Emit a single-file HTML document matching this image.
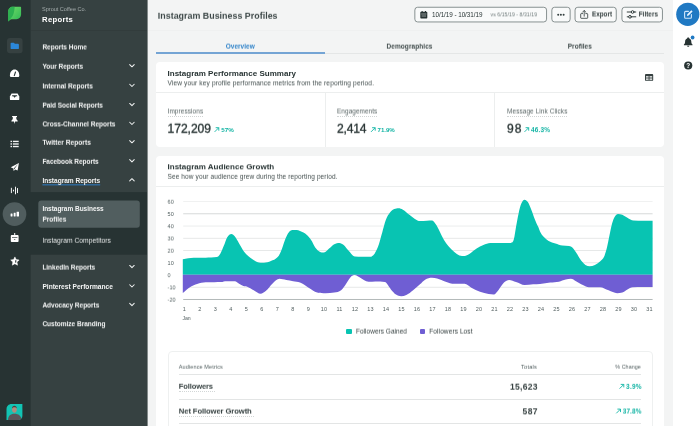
<!DOCTYPE html>
<html lang="en"><head><meta charset="utf-8"><title>Instagram Business Profiles</title>
<style>
html,body{margin:0;padding:0}
body{width:700px;height:426px;overflow:hidden;position:relative;background:#f3f4f4;font-family:"Liberation Sans", sans-serif;}
#app{position:absolute;left:0;top:0;width:700px;height:426px;overflow:hidden;will-change:transform}
.t{position:absolute;white-space:nowrap;margin:0;padding:0}
.b{position:absolute}
.g{display:contents}
svg{position:absolute;left:0;top:0;overflow:visible}

</style></head><body><div id="app">
<div class="b" style="left:30.00px;top:0.00px;width:117.00px;height:426.00px;background:#364141;"></div>
<div class="b" style="left:30.50px;top:30.00px;width:116.50px;height:0.80px;background:rgba(0,0,0,.07);"></div>
<div class="b" style="left:147.00px;top:0.00px;width:0.80px;height:426.00px;background:rgba(39,51,51,.55);"></div>
<div class="b" style="left:147.80px;top:30.00px;width:525.00px;height:0.80px;background:#eff0f0;"></div>
<div class="b" style="left:673.00px;top:0.00px;width:27.00px;height:426.00px;background:#ffffff;"></div>
<svg width="700" height="426" viewBox="0 0 700 426"><rect x="0" y="0" width="30.6" height="426" fill="#273333"/><rect x="30" y="192.1" width="117" height="62.6" fill="#273333"/><rect x="38.3" y="200.6" width="101.5" height="27.2" rx="3" fill="#515e5f"/><circle cx="14.5" cy="214.1" r="11.85" fill="#505d5e"/><rect x="7" y="38.1" width="15.6" height="15.2" rx="3" fill="#364141"/><rect x="42.4" y="184.25" width="57.8" height="1.15" fill="#2e74b4"/><rect x="414.85" y="7.25" width="131.70" height="14.7" rx="2.8" fill="#f9fafa" stroke="#7c8686" stroke-width="0.9"/><rect x="551.85" y="7.25" width="18.30" height="14.7" rx="2.8" fill="#f9fafa" stroke="#7c8686" stroke-width="0.9"/><rect x="575.05" y="7.25" width="41.20" height="14.7" rx="2.8" fill="#f9fafa" stroke="#7c8686" stroke-width="0.9"/><rect x="621.95" y="7.25" width="40.50" height="14.7" rx="2.8" fill="#f9fafa" stroke="#7c8686" stroke-width="0.9"/></svg>
<nav class="g" aria-label="Reports">
<div class="t" id="t1" style="left:42px;top:6px;font-size:5.55px;line-height:7px;color:#a3abab;padding-left:0.1px;letter-spacing:-0.020px;">Sprout Coffee Co.</div>
<div class="t" id="t2" style="left:42px;top:15px;font-size:7.70px;line-height:10px;color:#fff;padding-left:0.1px;font-weight:700;letter-spacing:0.292px;">Reports</div>
<div class="t" id="t3" style="left:42px;top:43px;font-size:6.55px;line-height:8px;color:#f3f4f4;padding-left:0.4px;font-weight:700;letter-spacing:-0.023px;will-change:transform;transform:translateY(0.43px) rotate(0.02deg);transform-origin:0 50%;">Reports Home</div>
<div class="t" id="t4" style="left:42px;top:62px;font-size:6.54px;line-height:8px;color:#f3f4f4;padding-left:0.4px;font-weight:700;letter-spacing:-0.017px;will-change:transform;transform:translateY(0.73px) rotate(0.02deg);transform-origin:0 50%;">Your Reports</div>
<div class="t" id="t5" style="left:42px;top:82px;font-size:6.59px;line-height:8px;color:#f3f4f4;padding-left:0.4px;font-weight:700;will-change:transform;transform:translateY(0.44px) rotate(0.02deg);transform-origin:0 50%;">Internal Reports</div>
<div class="t" id="t6" style="left:42px;top:101px;font-size:6.51px;line-height:8px;color:#f3f4f4;padding-left:0.4px;font-weight:700;letter-spacing:-0.030px;will-change:transform;transform:translateY(0.62px) rotate(0.02deg);transform-origin:0 50%;">Paid Social Reports</div>
<div class="t" id="t7" style="left:42px;top:120px;font-size:6.57px;line-height:8px;color:#f3f4f4;padding-left:0.4px;font-weight:700;letter-spacing:-0.010px;will-change:transform;transform:translateY(0.44px) rotate(0.02deg);transform-origin:0 50%;">Cross-Channel Reports</div>
<div class="t" id="t8" style="left:42px;top:138px;font-size:6.65px;line-height:8px;color:#f3f4f4;padding-left:0.4px;font-weight:700;letter-spacing:0.020px;will-change:transform;transform:translateY(0.76px) rotate(0.02deg);transform-origin:0 50%;">Twitter Reports</div>
<div class="t" id="t9" style="left:42px;top:157px;font-size:6.51px;line-height:8px;color:#f3f4f4;padding-left:0.4px;font-weight:700;letter-spacing:-0.028px;will-change:transform;transform:translateY(0.82px) rotate(0.02deg);transform-origin:0 50%;">Facebook Reports</div>
<div class="t" id="t10" style="left:42px;top:177px;font-size:6.57px;line-height:8px;color:#f3f4f4;padding-left:0.4px;font-weight:700;letter-spacing:-0.012px;">Instagram Reports</div>
<div class="t" id="t11" style="left:42px;top:205px;font-size:6.51px;line-height:8px;color:#f3f4f4;padding-left:0.4px;font-weight:700;letter-spacing:-0.028px;">Instagram Business</div>
<div class="t" id="t12" style="left:42px;top:215px;font-size:6.55px;line-height:8px;color:#f3f4f4;padding-left:0.4px;font-weight:700;letter-spacing:-0.017px;will-change:transform;transform:translateY(0.63px) rotate(0.02deg);transform-origin:0 50%;">Profiles</div>
<div class="t" id="t13" style="left:42px;top:263px;font-size:6.52px;line-height:8px;color:#f3f4f4;padding-left:0.4px;font-weight:700;letter-spacing:-0.028px;will-change:transform;transform:translateY(0.62px) rotate(0.02deg);transform-origin:0 50%;">LinkedIn Reports</div>
<div class="t" id="t14" style="left:42px;top:283px;font-size:6.61px;line-height:8px;color:#f3f4f4;padding-left:0.4px;font-weight:700;">Pinterest Performance</div>
<div class="t" id="t15" style="left:42px;top:301px;font-size:6.54px;line-height:8px;color:#f3f4f4;padding-left:0.4px;font-weight:700;letter-spacing:-0.024px;will-change:transform;transform:translateY(0.53px) rotate(0.02deg);transform-origin:0 50%;">Advocacy Reports</div>
<div class="t" id="t16" style="left:42px;top:320px;font-size:6.54px;line-height:8px;color:#f3f4f4;padding-left:0.4px;font-weight:700;letter-spacing:-0.024px;will-change:transform;transform:translateY(0.23px) rotate(0.02deg);transform-origin:0 50%;">Customize Branding</div>
<div class="t" id="t17" style="left:42px;top:236px;font-size:6.71px;line-height:8px;color:#e3e6e6;padding-left:0.4px;letter-spacing:0.039px;will-change:transform;transform:translateY(0.78px) rotate(0.02deg);transform-origin:0 50%;">Instagram Competitors</div>
</nav>
<header class="g">
<div class="t" id="t18" style="left:157px;top:10px;font-size:8.86px;line-height:11px;color:#3d4848;padding-left:0.8px;font-weight:700;letter-spacing:0.029px;will-change:transform;transform:translateY(0.75px) rotate(0.02deg);transform-origin:0 50%;">Instagram Business Profiles</div>
<div class="t" id="t19" style="left:432px;top:11px;font-size:6.32px;line-height:8px;color:#273333;letter-spacing:-0.050px;">10/1/19 - 10/31/19</div>
<div class="t" id="t20" style="left:490px;top:11px;font-size:5.11px;line-height:6px;color:#6e7a7a;padding-left:0.6px;letter-spacing:0.065px;will-change:transform;transform:translateY(0.38px) rotate(0.02deg);transform-origin:0 50%;">vs 6/15/19 - 8/31/19</div>
<div class="t" id="t21" style="left:592px;top:10px;font-size:6.33px;line-height:8px;color:#364141;padding-left:0.1px;font-weight:700;letter-spacing:-0.029px;will-change:transform;transform:translateY(0.46px) rotate(0.02deg);transform-origin:0 50%;">Export</div>
<div class="t" id="t22" style="left:638px;top:10px;font-size:6.42px;line-height:8px;color:#364141;padding-left:0.7px;font-weight:700;letter-spacing:0.011px;will-change:transform;transform:translateY(0.49px) rotate(0.02deg);transform-origin:0 50%;">Filters</div>
<div class="b" style="left:155.70px;top:53.30px;width:508.60px;height:0.90px;background:#e4e6e6;"></div>
<div class="b" style="left:155.70px;top:52.40px;width:169.30px;height:1.70px;background:#74a4d4;"></div>
<div class="t" id="t23" style="left:225px;top:42px;font-size:6.48px;line-height:8px;color:#2f83c9;padding-left:0.7px;font-weight:700;letter-spacing:0.031px;will-change:transform;transform:translateY(0.61px) rotate(0.02deg);transform-origin:0 50%;">Overview</div>
<div class="t" id="t24" style="left:386px;top:42px;font-size:6.54px;line-height:8px;color:#414c4c;padding-left:0.5px;font-weight:700;letter-spacing:0.057px;will-change:transform;transform:translateY(0.63px) rotate(0.02deg);transform-origin:0 50%;">Demographics</div>
<div class="t" id="t25" style="left:567px;top:42px;font-size:6.54px;line-height:8px;color:#414c4c;padding-left:0.65px;font-weight:700;letter-spacing:0.047px;will-change:transform;transform:translateY(0.63px) rotate(0.02deg);transform-origin:0 50%;">Profiles</div>
</header>
<main class="g">
<section class="g">
<div class="b" style="left:155.70px;top:61.90px;width:508.60px;height:85.00px;background:#fff;border-radius:4px;"></div>
<div class="b" style="left:155.70px;top:92.00px;width:508.60px;height:0.90px;background:#eceeee;"></div>
<div class="b" style="left:324.60px;top:92.00px;width:0.90px;height:54.90px;background:#eceeee;"></div>
<div class="b" style="left:494.10px;top:92.00px;width:0.90px;height:54.90px;background:#eceeee;"></div>
<div class="t" id="t26" style="left:167px;top:69px;font-size:8.02px;line-height:10px;color:#273333;padding-left:0.5px;font-weight:700;letter-spacing:0.007px;">Instagram Performance Summary</div>
<div class="t" id="t27" style="left:167px;top:79px;font-size:6.60px;line-height:8px;color:#434e4e;padding-left:0.5px;letter-spacing:0.119px;will-change:transform;transform:translateY(0.35px) rotate(0.02deg);transform-origin:0 50%;">View your key profile performance metrics from the reporting period.</div>
<div class="t" id="t28" style="left:167px;top:107px;font-size:6.46px;line-height:8px;color:#596565;padding-left:0.5px;letter-spacing:0.090px;will-change:transform;transform:translateY(0.5px) rotate(0.02deg);transform-origin:0 50%;">Impressions</div>
<div class="b" style="left:167.50px;top:115.90px;width:35.70px;height:0.00px;background:none;border-top:0.8px dotted #d0d4d4;"></div>
<div class="t" id="t29" style="left:167px;top:121px;font-size:12.10px;line-height:15px;color:#273333;padding-left:0.5px;letter-spacing:-0.036px;will-change:transform;transform:translateY(0.76px) rotate(0.02deg);transform-origin:0 50%;-webkit-text-stroke:0.32px #273333;">172,209</div>
<div class="t" id="t30" style="left:221px;top:126px;font-size:6.26px;line-height:8px;color:#10b3a3;padding-left:0.2px;font-weight:700;letter-spacing:0.042px;">57%</div>
<div class="t" id="t31" style="left:337px;top:107px;font-size:6.40px;line-height:8px;color:#596565;letter-spacing:0.086px;will-change:transform;transform:translateY(0.48px) rotate(0.02deg);transform-origin:0 50%;">Engagements</div>
<div class="b" style="left:337.00px;top:115.90px;width:40.30px;height:0.00px;background:none;border-top:0.8px dotted #d0d4d4;"></div>
<div class="t" id="t32" style="left:337px;top:121px;font-size:12.10px;line-height:15px;color:#273333;letter-spacing:-0.191px;will-change:transform;transform:translateY(0.76px) rotate(0.02deg);transform-origin:0 50%;-webkit-text-stroke:0.32px #273333;">2,414</div>
<div class="t" id="t33" style="left:377px;top:126px;font-size:6.13px;line-height:8px;color:#10b3a3;padding-left:0.6px;font-weight:700;letter-spacing:-0.044px;">71.9%</div>
<div class="t" id="t34" style="left:507px;top:107px;font-size:6.46px;line-height:8px;color:#596565;letter-spacing:0.087px;will-change:transform;transform:translateY(0.5px) rotate(0.02deg);transform-origin:0 50%;">Message Link Clicks</div>
<div class="b" style="left:507.00px;top:115.90px;width:60.40px;height:0.00px;background:none;border-top:0.8px dotted #d0d4d4;"></div>
<div class="t" id="t35" style="left:507px;top:121px;font-size:12.10px;line-height:15px;color:#273333;letter-spacing:0.900px;will-change:transform;transform:translateY(0.76px) rotate(0.02deg);transform-origin:0 50%;-webkit-text-stroke:0.32px #273333;">98</div>
<div class="t" id="t36" style="left:531px;top:126px;font-size:6.46px;line-height:8px;color:#10b3a3;padding-left:0.1px;font-weight:700;letter-spacing:0.122px;will-change:transform;transform:translateY(0.13px) rotate(0.02deg);transform-origin:0 50%;">46.3%</div>
</section>
<section class="g">
<div class="b" style="left:155.70px;top:155.80px;width:508.60px;height:280.00px;background:#fff;border-radius:4px;"></div>
<div class="b" style="left:155.70px;top:186.00px;width:508.60px;height:0.90px;background:#eceeee;"></div>
<div class="t" id="t37" style="left:167px;top:162px;font-size:8.01px;line-height:10px;color:#273333;padding-left:0.5px;font-weight:700;letter-spacing:0.013px;will-change:transform;transform:translateY(0.28px) rotate(0.02deg);transform-origin:0 50%;">Instagram Audience Growth</div>
<div class="t" id="t38" style="left:167px;top:172px;font-size:6.53px;line-height:8px;color:#434e4e;padding-left:0.5px;letter-spacing:0.109px;will-change:transform;transform:translateY(0.82px) rotate(0.02deg);transform-origin:0 50%;">See how your audience grew during the reporting period.</div>
<div class="t" id="t39" style="left:167px;top:198px;font-size:5.50px;line-height:7px;color:#515e5f;padding-left:0.6px;will-change:transform;transform:translateY(0.74px) rotate(0.02deg);transform-origin:0 50%;">60</div>
<div class="t" id="t40" style="left:167px;top:211px;font-size:5.50px;line-height:7px;color:#515e5f;padding-left:0.6px;">50</div>
<div class="t" id="t41" style="left:167px;top:223px;font-size:5.50px;line-height:7px;color:#515e5f;padding-left:0.6px;will-change:transform;transform:translateY(0.22px) rotate(0.02deg);transform-origin:0 50%;">40</div>
<div class="t" id="t42" style="left:167px;top:235px;font-size:5.50px;line-height:7px;color:#515e5f;padding-left:0.6px;will-change:transform;transform:translateY(0.46px) rotate(0.02deg);transform-origin:0 50%;">30</div>
<div class="t" id="t43" style="left:167px;top:247px;font-size:5.50px;line-height:7px;color:#515e5f;padding-left:0.6px;will-change:transform;transform:translateY(0.7px) rotate(0.02deg);transform-origin:0 50%;">20</div>
<div class="t" id="t44" style="left:167px;top:260px;font-size:5.50px;line-height:7px;color:#515e5f;padding-left:0.6px;">10</div>
<div class="t" id="t45" style="left:167px;top:272px;font-size:5.50px;line-height:7px;color:#515e5f;padding-left:0.6px;will-change:transform;transform:translateY(0.18px) rotate(0.02deg);transform-origin:0 50%;">0</div>
<div class="t" id="t46" style="left:167px;top:284px;font-size:5.50px;line-height:7px;color:#515e5f;padding-left:0.6px;will-change:transform;transform:translateY(0.42px) rotate(0.02deg);transform-origin:0 50%;">-10</div>
<div class="t" id="t47" style="left:167px;top:296px;font-size:5.50px;line-height:7px;color:#515e5f;padding-left:0.6px;will-change:transform;transform:translateY(0.66px) rotate(0.02deg);transform-origin:0 50%;">-20</div>
<div class="t" id="t48" style="left:182px;top:306px;font-size:5.50px;line-height:7px;color:#515e5f;padding-left:0.87px;">1</div>
<div class="t" id="t49" style="left:198px;top:306px;font-size:5.50px;line-height:7px;color:#515e5f;padding-left:0.37px;">2</div>
<div class="t" id="t50" style="left:213px;top:306px;font-size:5.50px;line-height:7px;color:#515e5f;padding-left:0.87px;">3</div>
<div class="t" id="t51" style="left:229px;top:306px;font-size:5.50px;line-height:7px;color:#515e5f;padding-left:0.37px;">4</div>
<div class="t" id="t52" style="left:244px;top:306px;font-size:5.50px;line-height:7px;color:#515e5f;padding-left:0.87px;">5</div>
<div class="t" id="t53" style="left:260px;top:306px;font-size:5.50px;line-height:7px;color:#515e5f;padding-left:0.37px;">6</div>
<div class="t" id="t54" style="left:275px;top:306px;font-size:5.50px;line-height:7px;color:#515e5f;padding-left:0.87px;">7</div>
<div class="t" id="t55" style="left:291px;top:306px;font-size:5.50px;line-height:7px;color:#515e5f;padding-left:0.37px;">8</div>
<div class="t" id="t56" style="left:306px;top:306px;font-size:5.50px;line-height:7px;color:#515e5f;padding-left:0.87px;">9</div>
<div class="t" id="t57" style="left:320px;top:306px;font-size:5.50px;line-height:7px;color:#515e5f;padding-left:0.84px;">10</div>
<div class="t" id="t58" style="left:336px;top:306px;font-size:5.50px;line-height:7px;color:#515e5f;padding-left:0.54px;">11</div>
<div class="t" id="t59" style="left:351px;top:306px;font-size:5.50px;line-height:7px;color:#515e5f;padding-left:0.84px;">12</div>
<div class="t" id="t60" style="left:367px;top:306px;font-size:5.50px;line-height:7px;color:#515e5f;padding-left:0.34px;">13</div>
<div class="t" id="t61" style="left:382px;top:306px;font-size:5.50px;line-height:7px;color:#515e5f;padding-left:0.84px;">14</div>
<div class="t" id="t62" style="left:398px;top:306px;font-size:5.50px;line-height:7px;color:#515e5f;padding-left:0.34px;">15</div>
<div class="t" id="t63" style="left:413px;top:306px;font-size:5.50px;line-height:7px;color:#515e5f;padding-left:0.84px;">16</div>
<div class="t" id="t64" style="left:429px;top:306px;font-size:5.50px;line-height:7px;color:#515e5f;padding-left:0.34px;">17</div>
<div class="t" id="t65" style="left:444px;top:306px;font-size:5.50px;line-height:7px;color:#515e5f;padding-left:0.84px;">18</div>
<div class="t" id="t66" style="left:460px;top:306px;font-size:5.50px;line-height:7px;color:#515e5f;padding-left:0.34px;">19</div>
<div class="t" id="t67" style="left:475px;top:306px;font-size:5.50px;line-height:7px;color:#515e5f;padding-left:0.84px;">20</div>
<div class="t" id="t68" style="left:491px;top:306px;font-size:5.50px;line-height:7px;color:#515e5f;padding-left:0.34px;">21</div>
<div class="t" id="t69" style="left:506px;top:306px;font-size:5.50px;line-height:7px;color:#515e5f;padding-left:0.84px;">22</div>
<div class="t" id="t70" style="left:522px;top:306px;font-size:5.50px;line-height:7px;color:#515e5f;padding-left:0.34px;">23</div>
<div class="t" id="t71" style="left:537px;top:306px;font-size:5.50px;line-height:7px;color:#515e5f;padding-left:0.84px;">24</div>
<div class="t" id="t72" style="left:553px;top:306px;font-size:5.50px;line-height:7px;color:#515e5f;padding-left:0.34px;">25</div>
<div class="t" id="t73" style="left:568px;top:306px;font-size:5.50px;line-height:7px;color:#515e5f;padding-left:0.84px;">26</div>
<div class="t" id="t74" style="left:584px;top:306px;font-size:5.50px;line-height:7px;color:#515e5f;padding-left:0.34px;">27</div>
<div class="t" id="t75" style="left:599px;top:306px;font-size:5.50px;line-height:7px;color:#515e5f;padding-left:0.84px;">28</div>
<div class="t" id="t76" style="left:615px;top:306px;font-size:5.50px;line-height:7px;color:#515e5f;padding-left:0.34px;">29</div>
<div class="t" id="t77" style="left:630px;top:306px;font-size:5.50px;line-height:7px;color:#515e5f;padding-left:0.84px;">30</div>
<div class="t" id="t78" style="left:646px;top:306px;font-size:5.50px;line-height:7px;color:#515e5f;padding-left:0.34px;">31</div>
<div class="t" id="t79" style="left:182px;top:315px;font-size:5.20px;line-height:6px;color:#515e5f;padding-left:0.4px;">Jan</div>
<div class="b" style="left:346.20px;top:328.60px;width:5.80px;height:5.80px;background:#08c4b2;border-radius:1px;"></div>
<div class="t" id="t80" style="left:356px;top:327px;font-size:6.45px;line-height:8px;color:#364141;letter-spacing:0.054px;will-change:transform;transform:translateY(0.6px) rotate(0.02deg);transform-origin:0 50%;">Followers Gained</div>
<div class="b" style="left:419.60px;top:328.60px;width:5.80px;height:5.80px;background:#6f5ed3;border-radius:1px;"></div>
<div class="t" id="t81" style="left:429px;top:327px;font-size:6.54px;line-height:8px;color:#364141;padding-left:0.3px;letter-spacing:0.084px;will-change:transform;transform:translateY(0.63px) rotate(0.02deg);transform-origin:0 50%;">Followers Lost</div>
<div class="b" style="left:167.50px;top:351.00px;width:485.00px;height:90.00px;background:#fff;border:0.9px solid #eef0f0;border-radius:4px;box-sizing:border-box;"></div>
<div class="b" style="left:178.80px;top:374.20px;width:462.40px;height:0.90px;background:#e3e5e5;"></div>
<div class="b" style="left:178.80px;top:399.20px;width:462.40px;height:0.90px;background:#e3e5e5;"></div>
<div class="b" style="left:178.80px;top:423.00px;width:462.40px;height:0.90px;background:#e3e5e5;"></div>
<div class="t" id="t82" style="left:178px;top:363px;font-size:5.52px;line-height:6px;color:#515e5f;padding-left:0.8px;letter-spacing:0.113px;will-change:transform;transform:translateY(0.71px) rotate(0.02deg);transform-origin:0 50%;">Audience Metrics</div>
<div class="t" id="t83" style="left:521px;top:363px;font-size:5.68px;line-height:6px;color:#515e5f;padding-left:0.1px;letter-spacing:0.174px;will-change:transform;transform:translateY(0.76px) rotate(0.02deg);transform-origin:0 50%;">Totals</div>
<div class="t" id="t84" style="left:615px;top:363px;font-size:5.36px;line-height:6px;color:#515e5f;padding-left:0.3px;letter-spacing:0.067px;will-change:transform;transform:translateY(0.66px) rotate(0.02deg);transform-origin:0 50%;">% Change</div>
<div class="t" id="t85" style="left:178px;top:381px;font-size:7.59px;line-height:10px;color:#364141;padding-left:0.8px;font-weight:700;letter-spacing:-0.147px;will-change:transform;transform:translateY(0.75px) rotate(0.02deg);transform-origin:0 50%;">Followers</div>
<div class="b" style="left:178.80px;top:390.90px;width:36.00px;height:0.00px;background:none;border-top:0.8px dotted #d3d7d7;"></div>
<div class="t" id="t86" style="left:178px;top:406px;font-size:7.67px;line-height:10px;color:#364141;padding-left:0.8px;font-weight:700;letter-spacing:-0.104px;will-change:transform;transform:translateY(0.58px) rotate(0.02deg);transform-origin:0 50%;">Net Follower Growth</div>
<div class="b" style="left:178.80px;top:415.70px;width:75.00px;height:0.00px;background:none;border-top:0.8px dotted #d3d7d7;"></div>
<div class="t" id="t87" style="left:509px;top:381px;font-size:8.56px;line-height:10px;color:#364141;padding-left:1.0px;font-weight:700;letter-spacing:0.249px;will-change:transform;transform:translateY(0.68px) rotate(0.02deg);transform-origin:0 50%;">15,623</div>
<div class="t" id="t88" style="left:522px;top:406px;font-size:8.51px;line-height:10px;color:#364141;padding-left:0.6px;font-weight:700;letter-spacing:0.306px;will-change:transform;transform:translateY(0.36px) rotate(0.02deg);transform-origin:0 50%;">587</div>
<div class="t" id="t89" style="left:626px;top:382px;font-size:6.53px;line-height:8px;color:#10b3a3;padding-left:0.1px;font-weight:700;letter-spacing:0.180px;will-change:transform;transform:translateY(0.85px) rotate(0.02deg);transform-origin:0 50%;">3.9%</div>
<div class="t" id="t90" style="left:622px;top:407px;font-size:6.46px;line-height:8px;color:#10b3a3;padding-left:0.7px;font-weight:700;letter-spacing:0.122px;will-change:transform;transform:translateY(0.53px) rotate(0.02deg);transform-origin:0 50%;">37.8%</div>
</section>
</main>
<svg width="700" height="426" viewBox="0 0 700 426">
<defs><linearGradient id="lg" x1="0" y1="0" x2="1" y2="1"><stop offset="0" stop-color="#75dd66"/><stop offset="1" stop-color="#2bb656"/></linearGradient></defs>
<rect x="183.20000000000002" y="201.11" width="469.4" height="0.9" fill="#eff0f0"/>
<rect x="183.20000000000002" y="213.35" width="469.4" height="0.9" fill="#d2d5d5"/>
<rect x="183.20000000000002" y="225.59" width="469.4" height="0.9" fill="#e9ebeb"/>
<rect x="183.20000000000002" y="237.83" width="469.4" height="0.9" fill="#e4e6e6"/>
<rect x="183.20000000000002" y="250.07" width="469.4" height="0.9" fill="#e4e6e6"/>
<rect x="183.20000000000002" y="262.31" width="469.4" height="0.9" fill="#e4e6e6"/>
<rect x="183.20000000000002" y="274.55" width="469.4" height="0.9" fill="#e4e6e6"/>
<rect x="183.20000000000002" y="286.79" width="469.4" height="0.9" fill="#e4e6e6"/>
<rect x="183.20000000000002" y="298.98" width="469.4" height="1" fill="#b3b9b9"/>
<path d="M182.8 274.65 L182.8 259.2 C186.4 258.7 190.1 257.7 193.7 257.7 C197.7 257.7 201.7 257.7 205.7 257.7 C209.4 257.7 213.1 257.7 216.9 257.1 C218.0 257.0 219.1 255.6 220.3 253.7 C221.4 251.9 222.6 248.7 223.7 246.0 C224.9 243.3 226.0 239.3 227.1 237.4 C228.6 235.1 230.0 234.0 231.4 234.0 C232.6 234.0 233.7 235.2 234.9 236.6 C236.3 238.2 237.7 241.1 239.1 243.4 C240.9 246.2 242.6 249.8 244.3 252.0 C246.3 254.6 248.3 256.1 250.3 257.7 C252.6 259.5 254.9 261.1 257.1 261.9 C259.4 262.8 261.7 262.8 264.0 262.8 C266.3 262.8 268.6 262.0 270.9 261.1 C273.1 260.1 275.4 259.8 277.7 257.1 C278.9 255.8 280.0 253.9 281.1 251.1 C282.3 248.4 283.4 243.7 284.6 240.9 C286.0 237.3 287.4 234.1 288.9 232.3 C290.3 230.5 291.7 230.1 293.1 230.1 C295.4 230.1 297.7 230.1 300.0 230.9 C302.3 231.7 304.6 232.8 306.9 234.9 C308.3 236.1 309.7 237.9 311.1 240.0 C312.6 242.1 314.0 245.8 315.4 247.7 C316.9 249.7 318.3 250.9 319.7 251.7 C321.1 252.5 322.6 252.5 324.0 252.5 C325.7 252.5 327.4 249.9 329.1 248.6 C330.9 247.2 332.6 245.2 334.3 244.3 C336.0 243.3 337.7 242.9 339.4 242.9 C340.9 242.9 342.3 243.9 343.7 245.1 C345.4 246.6 347.1 249.4 348.9 251.1 C350.9 253.2 352.9 256.5 354.9 256.6 C357.1 256.8 359.4 256.8 361.7 256.8 C364.6 256.8 367.4 256.8 370.3 256.8 C371.7 256.8 373.1 255.8 374.6 253.7 C376.0 251.6 377.4 248.4 378.9 244.3 C380.0 241.0 381.1 236.3 382.3 232.3 C383.4 228.3 384.6 223.3 385.7 220.3 C387.1 216.5 388.6 214.4 390.0 212.6 C391.4 210.7 392.9 209.9 394.3 209.1 C395.7 208.4 397.1 208.3 398.6 208.3 C400.0 208.3 401.4 208.9 402.9 209.7 C405.1 210.9 407.4 213.4 409.7 215.1 C411.4 216.5 413.1 217.9 414.9 218.9 C416.6 219.9 418.3 221.1 420.0 221.1 C422.3 221.1 424.6 220.9 426.9 220.8 C428.6 220.7 430.3 220.6 432.0 220.6 C433.1 220.6 434.3 222.2 435.4 223.7 C436.9 225.6 438.3 228.7 439.7 231.4 C441.1 234.1 442.6 237.6 444.0 240.0 C445.4 242.4 446.9 244.3 448.3 246.0 C450.3 248.4 452.3 250.3 454.3 252.0 C456.0 253.4 457.7 254.9 459.4 255.4 C461.1 255.9 462.9 255.9 464.6 255.9 C466.3 255.9 468.0 254.7 469.7 253.7 C472.0 252.4 474.3 250.0 476.6 248.6 C478.9 247.1 481.1 246.1 483.4 245.1 C485.7 244.2 488.0 243.2 490.3 243.1 C493.1 242.9 496.0 242.9 498.9 242.9 C502.9 242.9 506.9 242.9 510.9 242.9 C511.9 242.9 512.9 242.8 513.9 239.1 C514.6 236.7 515.3 231.0 516.0 227.1 C516.9 222.4 517.7 217.3 518.6 213.4 C519.4 209.6 520.3 206.1 521.1 204.0 C522.3 201.2 523.4 199.7 524.6 199.7 C525.7 199.7 526.9 200.6 528.0 202.3 C529.1 204.0 530.3 207.1 531.4 210.0 C532.6 212.9 533.7 216.6 534.9 219.4 C536.0 222.3 537.1 224.4 538.3 227.1 C538.9 228.5 539.4 230.3 540.0 231.4 C541.1 233.7 542.3 235.2 543.4 236.6 C545.1 238.6 546.9 239.8 548.6 240.9 C550.9 242.2 553.1 242.7 555.4 243.4 C557.7 244.2 560.0 245.2 562.3 245.5 C564.6 245.8 566.9 245.6 569.1 246.0 C570.3 246.2 571.4 246.6 572.6 247.7 C574.0 249.1 575.4 251.6 576.9 253.7 C578.3 255.9 579.7 258.7 581.1 260.6 C582.6 262.4 584.0 263.9 585.4 264.9 C586.9 265.8 588.3 266.2 589.7 266.2 C591.4 266.2 593.1 265.7 594.9 264.9 C596.6 264.1 598.3 263.0 600.0 261.4 C601.4 260.1 602.9 259.5 604.3 256.3 C605.1 254.3 606.0 251.1 606.9 247.7 C607.7 244.3 608.6 239.7 609.4 235.7 C610.3 231.7 611.1 226.9 612.0 223.7 C612.9 220.6 613.7 218.4 614.6 216.9 C615.7 214.8 616.9 213.9 618.0 213.9 C619.4 213.9 620.9 214.3 622.3 214.8 C624.0 215.5 625.7 216.8 627.4 217.7 C629.4 218.8 631.4 220.5 633.4 220.6 C636.6 220.8 639.7 220.8 642.9 220.8 C646.1 220.8 649.4 220.8 652.6 220.8 L652.6 274.65 Z" fill="#08c4b2"/>
<path d="M182.8 274.65 L182.8 292.9 C185.3 290.9 187.8 288.4 190.3 286.9 C192.6 285.5 194.9 284.7 197.1 283.9 C200.0 283.0 202.9 282.2 205.7 282.2 C208.6 282.2 211.4 282.2 214.3 282.2 C216.6 282.2 218.9 282.2 221.1 282.1 C222.9 281.9 224.6 281.2 226.3 281.2 C229.1 281.2 232.0 281.2 234.9 281.2 C236.3 281.2 237.7 283.0 239.1 283.8 C240.6 284.6 242.0 285.5 243.4 286.0 C244.9 286.5 246.3 286.3 247.7 286.9 C249.7 287.6 251.7 289.2 253.7 290.3 C256.0 291.5 258.3 293.7 260.6 293.7 C262.3 293.7 264.0 292.5 265.7 291.1 C268.0 289.3 270.3 285.5 272.6 283.4 C274.9 281.4 277.1 278.8 279.4 278.8 C281.7 278.8 284.0 279.6 286.3 280.0 C288.6 280.4 290.9 280.8 293.1 281.2 C295.4 281.6 297.7 281.7 300.0 282.6 C302.9 283.7 305.7 286.1 308.6 287.7 C311.4 289.4 314.3 291.8 317.1 292.5 C320.0 293.2 322.9 293.2 325.7 293.2 C328.6 293.2 331.4 293.1 334.3 292.5 C336.6 292.0 338.9 292.2 341.1 290.3 C342.9 288.9 344.6 285.8 346.3 283.4 C348.0 281.1 349.7 277.8 351.4 276.2 C352.6 275.2 353.7 274.9 354.9 274.9 C356.3 274.9 357.7 276.2 359.1 276.9 C362.3 278.5 365.4 281.7 368.6 281.7 C370.9 281.7 373.1 281.4 375.4 281.4 C378.6 281.4 381.7 281.4 384.9 282.1 C386.9 282.5 388.9 287.2 390.9 289.4 C392.6 291.3 394.3 293.4 396.0 294.6 C397.7 295.7 399.4 296.3 401.1 296.3 C402.9 296.3 404.6 295.9 406.3 295.1 C408.6 294.0 410.9 292.1 413.1 290.3 C415.4 288.5 417.7 286.3 420.0 284.3 C421.7 282.8 423.4 280.7 425.1 279.7 C427.4 278.3 429.7 277.8 432.0 277.8 C433.7 277.8 435.4 278.2 437.1 278.6 C440.0 279.4 442.9 280.9 445.7 281.7 C448.6 282.6 451.4 283.8 454.3 283.8 C457.7 283.8 461.1 283.8 464.6 283.8 C466.9 283.8 469.1 286.5 471.4 287.7 C474.3 289.2 477.1 290.6 480.0 291.7 C482.9 292.7 485.7 293.5 488.6 294.1 C490.3 294.4 492.0 294.6 493.7 294.6 C495.4 294.6 497.1 291.4 498.9 289.4 C500.6 287.4 502.3 284.1 504.0 282.6 C505.7 281.0 507.4 280.0 509.1 280.0 C511.4 280.0 513.7 281.3 516.0 282.1 C518.9 283.0 521.7 285.1 524.6 285.1 C527.4 285.1 530.3 284.5 533.1 284.3 C535.4 284.1 537.7 284.2 540.0 283.9 C543.4 283.6 546.9 283.0 550.3 282.6 C553.1 282.2 556.0 282.3 558.9 281.7 C561.1 281.2 563.4 280.0 565.7 279.5 C567.4 279.1 569.1 278.8 570.9 278.8 C572.6 278.8 574.3 280.3 576.0 281.2 C578.3 282.4 580.6 284.1 582.9 285.1 C584.9 286.1 586.9 287.2 588.9 287.2 C592.6 287.2 596.3 287.2 600.0 287.2 C602.9 287.2 605.7 289.3 608.6 290.3 C611.4 291.3 614.3 293.2 617.1 293.2 C618.9 293.2 620.6 293.1 622.3 292.5 C624.0 291.9 625.7 290.3 627.4 289.4 C629.1 288.5 630.9 287.4 632.6 287.2 C636.0 286.9 639.4 286.9 642.9 286.9 C646.1 286.9 649.4 286.9 652.6 286.9 L652.6 274.65 Z" fill="#6f5ed3"/>
<path d="M129.7 64.55 L131.95 66.80 L134.2 64.55" fill="none" stroke="#eef0f0" stroke-width="1.05" stroke-linecap="round" stroke-linejoin="round"/>
<path d="M129.7 84.25 L131.95 86.50 L134.2 84.25" fill="none" stroke="#eef0f0" stroke-width="1.05" stroke-linecap="round" stroke-linejoin="round"/>
<path d="M129.7 103.45 L131.95 105.70 L134.2 103.45" fill="none" stroke="#eef0f0" stroke-width="1.05" stroke-linecap="round" stroke-linejoin="round"/>
<path d="M129.7 122.25 L131.95 124.50 L134.2 122.25" fill="none" stroke="#eef0f0" stroke-width="1.05" stroke-linecap="round" stroke-linejoin="round"/>
<path d="M129.7 140.55 L131.95 142.80 L134.2 140.55" fill="none" stroke="#eef0f0" stroke-width="1.05" stroke-linecap="round" stroke-linejoin="round"/>
<path d="M129.7 159.65 L131.95 161.90 L134.2 159.65" fill="none" stroke="#eef0f0" stroke-width="1.05" stroke-linecap="round" stroke-linejoin="round"/>
<path d="M129.7 180.95 L131.95 178.70 L134.2 180.95" fill="none" stroke="#eef0f0" stroke-width="1.05" stroke-linecap="round" stroke-linejoin="round"/>
<path d="M129.7 265.45 L131.95 267.70 L134.2 265.45" fill="none" stroke="#eef0f0" stroke-width="1.05" stroke-linecap="round" stroke-linejoin="round"/>
<path d="M129.7 284.75 L131.95 287.00 L134.2 284.75" fill="none" stroke="#eef0f0" stroke-width="1.05" stroke-linecap="round" stroke-linejoin="round"/>
<path d="M129.7 303.35 L131.95 305.60 L134.2 303.35" fill="none" stroke="#eef0f0" stroke-width="1.05" stroke-linecap="round" stroke-linejoin="round"/>
<path d="M214.6 131.9 L218.7 127.8 M215.7 127.7 H218.8 V130.7" fill="none" stroke="#0fb5a5" stroke-width="0.9"/>
<path d="M371.0 131.9 L375.1 127.8 M372.1 127.7 H375.2 V130.7" fill="none" stroke="#0fb5a5" stroke-width="0.9"/>
<path d="M524.5 131.9 L528.6 127.8 M525.6 127.7 H528.7 V130.7" fill="none" stroke="#0fb5a5" stroke-width="0.9"/>
<path d="M619.6 388.6 L623.7 384.5 M620.7 384.4 H623.8 V387.4" fill="none" stroke="#0fb5a5" stroke-width="0.9"/>
<path d="M616.3 413.3 L620.4 409.2 M617.4 409.1 H620.5 V412.1" fill="none" stroke="#0fb5a5" stroke-width="0.9"/>
<!-- logo -->
<path d="M8.2 21.6 L8.2 11.6 C8.2 8.9 10.2 6.8 12.9 6.8 L20.1 6.8 C20.8 6.8 21.1 7.1 21.1 7.8 L21.1 14.5 C21.1 17.2 19.1 19.2 16.4 19.2 L11.7 19.2 C10.4 19.3 9.4 20.2 8.2 21.6 Z" fill="url(#lg)"/>
<path d="M8.2 21.6 L8.2 11.6 C8.2 8.9 10.2 6.8 12.9 6.8 L14.7 6.8 C14.5 10 14 13.3 12.7 15.8 C11.5 18 9.7 19.8 8.2 21.6 Z" fill="#27ad50" opacity=".9"/>
<!-- folder -->
<path d="M10.6 43.6 C10.6 43.1 11 42.7 11.5 42.7 L13.8 42.7 L14.9 43.8 L18 43.8 C18.5 43.8 18.9 44.2 18.9 44.7 L18.9 48.2 C18.9 48.7 18.5 49.1 18 49.1 L11.5 49.1 C11 49.1 10.6 48.7 10.6 48.2 Z" fill="#2b87d9"/>
<!-- gauge -->
<path d="M9.9 75.4 C9.9 72.2 12 69.6 14.6 69.6 C17.2 69.6 19.3 72.2 19.3 75.4 C19.3 76.3 18.9 76.9 18.3 76.9 L10.9 76.9 C10.3 76.9 9.9 76.3 9.9 75.4 Z" fill="#fff"/>
<path d="M15.5 72 L14.3 75.6" stroke="#273333" stroke-width="1.1" stroke-linecap="round" fill="none"/>
<!-- inbox -->
<path d="M11.6 93.6 L17.6 93.6 L19.3 96.4 L19.3 99.2 C19.3 99.7 18.9 100.1 18.4 100.1 L10.8 100.1 C10.3 100.1 9.9 99.7 9.9 99.2 L9.9 96.4 Z" fill="#fff"/>
<path d="M12.3 95.2 L16.9 95.2 L17.4 96.2 L15.9 96.2 L14.6 97.7 L13.3 96.2 L11.8 96.2 Z" fill="#273333"/>
<!-- pin -->
<path d="M12.1 115.9 L17 115.9 L17 117 L16.2 117.3 L16.4 119.3 C17.2 119.8 17.7 120.6 17.7 121.5 L15.1 121.5 L14.55 124.1 L14 121.5 L11.4 121.5 C11.4 120.6 11.9 119.8 12.7 119.3 L12.9 117.3 L12.1 117 Z" fill="#fff"/>
<!-- list -->
<g fill="#f3f4f4"><rect x="10.5" y="140.75" width="1.5" height="1.35"/><rect x="12.9" y="140.75" width="5.8" height="1.35"/><rect x="10.5" y="143.3" width="1.5" height="1.35"/><rect x="12.9" y="143.3" width="5.8" height="1.35"/><rect x="10.5" y="145.85" width="1.5" height="1.35"/><rect x="12.9" y="145.85" width="5.8" height="1.35"/></g>
<!-- paper plane -->
<path d="M18.9 162.9 L10.8 167.3 L13.2 168.6 L13.7 171.1 L15.2 169.5 L17.6 170.4 Z" fill="#fff"/>
<path d="M18 164.1 L13.7 168.4 L13.9 169.8 L14.8 168.6 Z" fill="#273333"/>
<!-- waveform -->
<g stroke="#f3f4f4" stroke-width="1" stroke-linecap="round" fill="none"><path d="M11.4 188.2 V192.7"/><path d="M13.5 190.1 V191.0"/><path d="M15.5 187.1 V193.9"/><path d="M17.5 188.5 V192.7"/></g>
<!-- bars (active) -->
<g fill="#fff"><rect x="10.6" y="213.6" width="1.9" height="2.8" rx=".3"/><rect x="13.7" y="212.8" width="1.9" height="3.6" rx=".3"/><rect x="16.6" y="211.8" width="2.4" height="4.6" rx=".3"/></g>
<!-- bot -->
<path d="M14.2 232.9 H15.2 V235 H17.5 C18.1 235 18.6 235.5 18.6 236.1 V241 C18.6 241.6 18.1 242.1 17.5 242.1 H11.9 C11.3 242.1 10.8 241.6 10.8 241 V236.1 C10.8 235.5 11.3 235 11.9 235 H14.2 Z" fill="#fff"/>
<path d="M12 237.3 H17.4 V238 H12 Z M13.7 238.9 H15.7 L14.7 239.9 Z" fill="#273333" opacity=".85"/>
<!-- star -->
<path d="M14.9 256.9 L16.2 259.6 L19.1 260 L17 262.1 L17.5 265.2 L14.9 263.7 L12.3 265.2 L12.8 262.1 L10.7 260 L13.6 259.6 Z" fill="#fff" stroke="#fff" stroke-width=".5" stroke-linejoin="round"/>
<path d="M15.2 259.6 L15.7 260.6 L17 260.8 L16 261.8 L16.3 263.1 L15.2 262.5 Z" fill="#273333"/>
<!-- avatar -->
<clipPath id="av"><path d="M6.5 409 C6.5 406 8.6 403.9 11.6 403.9 L22.4 403.9 L22.4 415.8 C22.4 418.3 20.7 420 18.2 420 L6.5 420 Z"/></clipPath>
<g clip-path="url(#av)"><rect x="6" y="403" width="17" height="18" fill="#12c4b4"/>
<path d="M8 420.5 C8 416.2 10.2 413.8 14.4 413.8 C18.6 413.8 21.4 416 21.8 420.5 Z" fill="#5b565a"/>
<ellipse cx="14.4" cy="409.6" rx="2.4" ry="3.1" fill="#b08c7d"/><path d="M12 408.6 C12 406.6 13 405.8 14.4 405.8 C15.8 405.8 16.8 406.6 16.8 408.6 C16.2 407.6 15.4 407.3 14.4 407.3 C13.4 407.3 12.6 407.6 12 408.6 Z" fill="#4b4340"/></g>
<!-- calendar -->
<path d="M420.3 12.4 C420.3 12 420.6 11.7 421 11.7 H421.6 V10.9 H422.7 V11.7 H424.9 V10.9 H426 V11.7 H426.6 C427 11.7 427.3 12 427.3 12.4 V17.8 C427.3 18.2 427 18.5 426.6 18.5 H421 C420.6 18.5 420.3 18.2 420.3 17.8 Z" fill="#273333"/>
<path d="M421.2 13.7 H426.4 V14.3 H421.2 Z M421.6 15.7 H426 V16.3 H421.6 Z" fill="#f8f9f9"/>
<!-- dots -->
<g fill="#364141"><circle cx="558.2" cy="14.7" r="1"/><circle cx="560.9" cy="14.7" r="1"/><circle cx="563.6" cy="14.7" r="1"/></g>
<!-- export -->
<path d="M582.6 13.6 H581.2 C580.9 13.6 580.7 13.8 580.7 14.1 V17.8 C580.7 18.1 580.9 18.3 581.2 18.3 H587.2 C587.5 18.3 587.7 18.1 587.7 17.8 V14.1 C587.7 13.8 587.5 13.6 587.2 13.6 H585.8 M584.2 16.2 V10.6 M582.5 12.2 L584.2 10.5 L585.9 12.2" fill="none" stroke="#364141" stroke-width="0.85" stroke-linecap="round" stroke-linejoin="round"/>
<!-- filters -->
<g fill="none" stroke="#364141" stroke-width="1" stroke-linecap="round"><path d="M627.2 12 H631.3 M634 12 H635.8 M627.2 16.8 H628.6 M631.3 16.8 H635.8"/><circle cx="632.6" cy="12" r="1.35"/><circle cx="630" cy="16.8" r="1.35"/></g>
<!-- table icon -->
<path d="M645 74.9 C645 74.4 645.4 74 645.9 74 H652.3 C652.8 74 653.2 74.4 653.2 74.9 V79.9 C653.2 80.4 652.8 80.8 652.3 80.8 H645.9 C645.4 80.8 645 80.4 645 79.9 Z" fill="#364141"/>
<path d="M646 76.2 H648.6 V77.6 H646 Z M649.5 76.2 H652.2 V77.6 H649.5 Z M646 78.4 H648.6 V79.8 H646 Z M649.5 78.4 H652.2 V79.8 H649.5 Z" fill="#fff"/>
<!-- compose -->
<circle cx="687.8" cy="14.3" r="11.6" fill="#2079c3"/>
<path d="M688.4 11.4 H685.6 C685 11.4 684.6 11.8 684.6 12.4 V17.2 C684.6 17.8 685 18.2 685.6 18.2 H690.4 C691 18.2 691.4 17.8 691.4 17.2 V14.6" fill="none" stroke="#cfe6fb" stroke-width="1.1" stroke-linecap="round"/>
<path d="M687 15.9 L687.3 14.3 L691.3 10.3 L692.6 11.6 L688.6 15.6 Z" fill="#e9f4ff"/>
<!-- bell -->
<path d="M688.2 37.5 C689 37.5 689.3 38 689.3 38.5 C690.7 39 691.3 40.2 691.3 41.6 C691.3 43.2 691.8 44 692.5 44.6 V45.2 H683.9 V44.6 C684.6 44 685.1 43.2 685.1 41.6 C685.1 40.2 685.7 39 687.1 38.5 C687.1 38 687.4 37.5 688.2 37.5 Z M687.1 45.7 H689.3 C689.3 46.3 688.8 46.7 688.2 46.7 C687.6 46.7 687.1 46.3 687.1 45.7 Z" fill="#273333"/>
<circle cx="692.6" cy="37.5" r="1.9" fill="#2079c3"/>
<!-- help -->
<circle cx="688.2" cy="65.5" r="4.1" fill="#273333"/>
<text x="688.2" y="67.7" font-family="Liberation Sans, sans-serif" font-weight="700" font-size="6.4" fill="#fff" text-anchor="middle">?</text>

</svg>
</div></body></html>
